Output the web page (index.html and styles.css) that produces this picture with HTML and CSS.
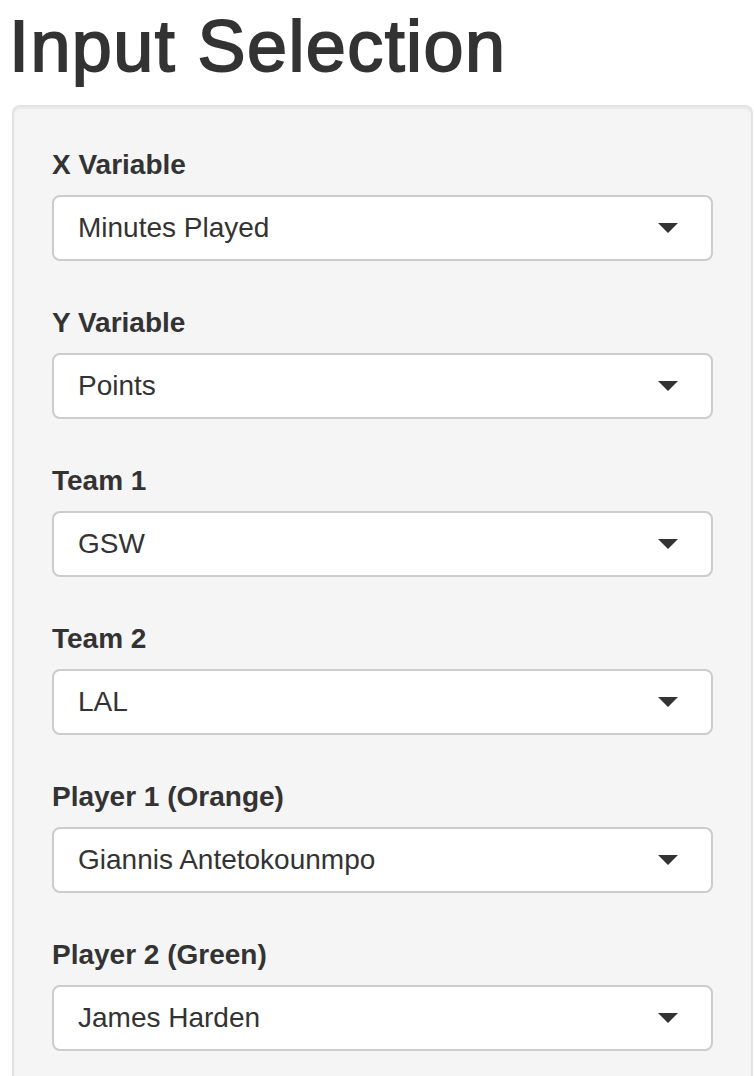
FILE: index.html
```html
<!DOCTYPE html>
<html lang="en">
<head>
<meta charset="utf-8">
<title>Input Selection</title>
<link rel="stylesheet" href="styles.css">
</head>
<body>
<div class="page">
  <h1 class="title">Input Selection</h1>
  <form class="well">
    <div class="form-group">
      <label class="control-label">X Variable</label>
      <div class="select"><span class="select-value">Minutes Played</span><span class="caret"></span></div>
    </div>
    <div class="form-group">
      <label class="control-label">Y Variable</label>
      <div class="select"><span class="select-value">Points</span><span class="caret"></span></div>
    </div>
    <div class="form-group">
      <label class="control-label">Team 1</label>
      <div class="select"><span class="select-value">GSW</span><span class="caret"></span></div>
    </div>
    <div class="form-group">
      <label class="control-label">Team 2</label>
      <div class="select"><span class="select-value">LAL</span><span class="caret"></span></div>
    </div>
    <div class="form-group">
      <label class="control-label">Player 1 (Orange)</label>
      <div class="select"><span class="select-value">Giannis Antetokounmpo</span><span class="caret"></span></div>
    </div>
    <div class="form-group">
      <label class="control-label">Player 2 (Green)</label>
      <div class="select"><span class="select-value">James Harden</span><span class="caret"></span></div>
    </div>
  </form>
</div>
</body>
</html>
```

FILE: styles.css
```css
html, body {
  margin: 0;
  padding: 0;
  background: #ffffff;
}

body {
  font-family: "Liberation Sans", Arial, Helvetica, sans-serif;
  color: #333333;
}

.page {
  padding-left: 12px;
  padding-right: 1px;
}

.title {
  margin: 7px 0 19px -3px;
  font-size: 72px;
  line-height: 79px;
  font-weight: normal;
  letter-spacing: 1.4px;
  color: #333333;
  -webkit-text-stroke: 1.8px #333333;
}

.well {
  display: flex;
  flex-direction: column;
  gap: 42px;
  margin: 0;
  padding: 38px 38px 25px;
  background: #f5f5f5;
  border: 2px solid #e3e3e3;
  border-bottom: none;
  border-radius: 8px 8px 0 0;
  box-shadow: inset 0 2px 2px rgba(0, 0, 0, 0.05);
}

.form-group {
  display: flex;
  flex-direction: column;
}

.control-label {
  display: block;
  margin-bottom: 10px;
  font-size: 28px;
  line-height: 40px;
  font-weight: bold;
  color: #333333;
}

.select {
  box-sizing: border-box;
  height: 66px;
  display: flex;
  align-items: center;
  justify-content: space-between;
  padding: 0 33px 0 24px;
  background: #ffffff;
  border: 2px solid #cccccc;
  border-radius: 8px;
}

.select-value {
  font-size: 28px;
  line-height: 40px;
  color: #333333;
}

.caret {
  width: 0;
  height: 0;
  border-style: solid;
  border-width: 10px 10px 0 10px;
  border-color: #333333 transparent transparent transparent;
}
```
